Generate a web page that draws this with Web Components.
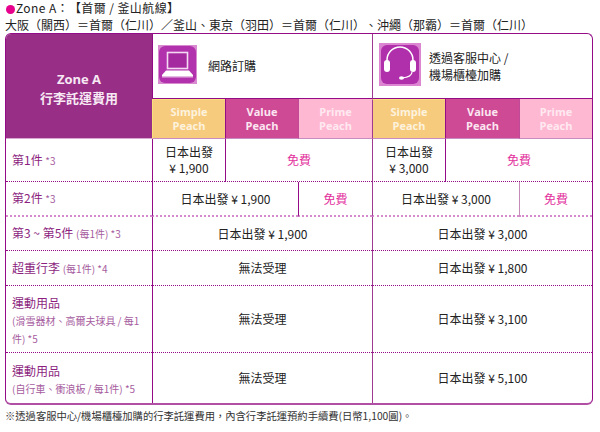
<!DOCTYPE html>
<html lang="zh-Hant">
<head>
<meta charset="utf-8">
<title>Zone A</title>
<style>
    html, body { margin: 0; background: #fff; }
    body { font-family: "Noto Sans CJK TC", sans-serif; }
</style>
</head>
<body>
<zone-page>
    <zone-title slot="top" route="Zone A：【首爾 / 釜山航線】">大阪（關西）＝首爾（仁川）／釜山、東京（羽田）＝首爾（仁川）、沖繩（那霸）＝首爾（仁川）</zone-title>

    <fare-table>
        <corner-head>Zone A<br>行李託運費用</corner-head>
        <channel-head icon="laptop">網路訂購</channel-head>
        <channel-head icon="headset" class="second">透過客服中心 /<br>機場櫃檯加購</channel-head>

        <plan-head kind="simple" first>Simple<br>Peach</plan-head>
        <plan-head kind="value">Value<br>Peach</plan-head>
        <plan-head kind="prime">Prime<br>Peach</plan-head>
        <plan-head kind="simple" first split>Simple<br>Peach</plan-head>
        <plan-head kind="value">Value<br>Peach</plan-head>
        <plan-head kind="prime">Prime<br>Peach</plan-head>

        <row-label line="dark">第1件 <small>*3</small></row-label>
        <fare-cell line="dark" edge="strong">日本出發<br>¥ 1,900</fare-cell>
        <fare-cell line="dark" edge="strong" span="2" free>免費</fare-cell>
        <fare-cell line="dark" edge="mid">日本出發<br>¥ 3,000</fare-cell>
        <fare-cell line="dark" edge="strong" span="2" free>免費</fare-cell>

        <row-label line="pale">第2件 <small>*3</small></row-label>
        <fare-cell line="pale" edge="strong" span="2">日本出發 ¥ 1,900</fare-cell>
        <fare-cell line="pale" edge="strong" free>免費</fare-cell>
        <fare-cell line="pale" edge="mid" span="2">日本出發 ¥ 3,000</fare-cell>
        <fare-cell line="pale" edge="pale" free>免費</fare-cell>

        <row-label line="dark">第3 ~ 第5件 <small>(每1件) *3</small></row-label>
        <fare-cell line="dark" edge="strong" span="3">日本出發 ¥ 1,900</fare-cell>
        <fare-cell line="dark" edge="mid" span="3">日本出發 ¥ 3,000</fare-cell>

        <row-label line="dark">超重行李 <small>(每1件) *4</small></row-label>
        <fare-cell line="dark" edge="strong" span="3">無法受理</fare-cell>
        <fare-cell line="dark" edge="mid" span="3">日本出發 ¥ 1,800</fare-cell>

        <row-label line="dark" tall>運動用品<br><small>(滑雪器材、高爾夫球具 / 每1件) *5</small></row-label>
        <fare-cell line="dark" edge="strong" span="3">無法受理</fare-cell>
        <fare-cell line="dark" edge="mid" span="3">日本出發 ¥ 3,100</fare-cell>

        <row-label tall>運動用品<br><small>(自行車、衝浪板 / 每1件) *5</small></row-label>
        <fare-cell edge="strong" span="3">無法受理</fare-cell>
        <fare-cell edge="mid" span="3">日本出發 ¥ 5,100</fare-cell>
    </fare-table>

    <fare-note>※透過客服中心/機場櫃檯加購的行李託運費用，內含行李託運預約手續費(日幣1,100圓)。</fare-note>
</zone-page>

<script>
const CJK = '"Noto Sans CJK TC", sans-serif';

const ICONS = {
    laptop: `
        <svg width="39" height="39" viewBox="0 0 39 39">
            <rect width="39" height="39" fill="#d98bd0"/>
            <rect x="1" y="1" width="37" height="37" rx="6" fill="#b232ae"/>
            <rect x="9.500" y="7.500" width="20" height="16" fill="#a52a9f" stroke="#f3d9f1" stroke-width="1.600"/>
            <path d="M8 25.500h23l4 4.500v1H4v-1z" fill="#fff"/>
            <path d="M4 31h31v1.500H4z" fill="#e5b9e2"/>
        </svg>`,
    headset: `
        <svg width="42" height="43" viewBox="0 0 42 43">
            <rect width="42" height="43" fill="#dc86d2"/>
            <rect x="2" y="2" width="38" height="39" rx="6" fill="#b02fab"/>
            <path d="M8 20v-3a13 13 0 0 1 26 0v3" fill="none" stroke="#fff" stroke-width="1.500"/>
            <rect x="5" y="17" width="6" height="12" rx="3" fill="#fff"/>
            <rect x="31" y="17" width="6" height="12" rx="3" fill="#fff"/>
            <path d="M33 29c0 4-5 5.500-10 6" fill="none" stroke="#fff" stroke-width="1.200"/>
            <ellipse cx="22.500" cy="35" rx="2.500" ry="1.700" fill="#fff"/>
        </svg>`
};

class ZonePage extends HTMLElement {
    constructor() {
        super();
        this.attachShadow({ mode: "open" });
        this.shadowRoot.innerHTML = `
            <style>
                :host {
                    display: flex;
                    flex-direction: column;
                    width: 600px;
                    height: 432px;
                    box-sizing: border-box;
                    padding: 0 7px 0 5px;
                    overflow: hidden;
                }
            </style>
            <slot name="top"></slot>
            <slot></slot>
        `;
    }
}

class ZoneTitle extends HTMLElement {
    constructor() {
        super();
        this.attachShadow({ mode: "open" });
        this.shadowRoot.innerHTML = `
            <style>
                :host {
                    display: block;
                    height: 33px;
                    color: #222;
                    font: 12px/16px ${CJK};
                    white-space: nowrap;
                    text-spacing-trim: space-all;
                }
                .route { height: 17px; line-height: 15px; letter-spacing: 0.400px; }
                .dot {
                    display: inline-block;
                    width: 9px;
                    height: 9px;
                    margin: 0 1px 0 1px;
                    border-radius: 50%;
                    background: #e6008c;
                    vertical-align: -0.5px;
                }
            </style>
            <div class="route"><span class="dot"></span><span class="name"></span></div>
            <div><slot></slot></div>
        `;
    }

    connectedCallback() {
        this.shadowRoot.querySelector(".name").textContent = this.getAttribute("route");
    }
}

class FareTable extends HTMLElement {
    constructor() {
        super();
        this.attachShadow({ mode: "open" });
        this.shadowRoot.innerHTML = `
            <style>
                :host {
                    display: grid;
                    box-sizing: border-box;
                    width: 588px;
                    grid-template-columns: 146px 73px 73px 74px 73px 74px 73px;
                    grid-template-rows: 65px 40px 43px 35px 34px 35px 67px 50px;
                    border: 1px solid #930b87;
                    border-bottom: 2px solid #b04fa4;
                    border-radius: 6px;
                    overflow: hidden;
                    background: #fff;
                }
            </style>
            <slot></slot>
        `;
    }
}

class CornerHead extends HTMLElement {
    constructor() {
        super();
        this.attachShadow({ mode: "open" });
        this.shadowRoot.innerHTML = `
            <style>
                :host {
                    display: flex;
                    grid-row: span 2;
                    align-items: center;
                    justify-content: center;
                    box-sizing: border-box;
                    padding-top: 6px;
                    background: #992e87;
                    border-bottom: 1px solid #d9a8d2;
                    color: #f6e9f3;
                    font: bold 13px/19px "Open Sans", ${CJK};
                    text-align: center;
                }
            </style>
            <div><slot></slot></div>
        `;
    }
}

class ChannelHead extends HTMLElement {
    constructor() {
        super();
        this.attachShadow({ mode: "open" });
        const type = this.getAttribute("icon");
        const second = type === "headset";
        this.shadowRoot.innerHTML = `
            <style>
                :host {
                    display: flex;
                    grid-column: span 3;
                    align-items: center;
                    box-sizing: border-box;
                    padding: ${second ? "0 0 4px 6px" : "0 0 4px 5px"};
                    gap: ${second ? "8px" : "11px"};
                    border-left: 1px solid ${second ? "#a03a90" : "#930b87"};
                    border-bottom: 1px solid #930b87;
                    color: #222;
                    font: 12px/17px ${CJK};
                }
                svg { display: block; flex: none; }
                .text { padding-top: ${second ? "4px" : "3px"}; }
            </style>
            ${ICONS[type]}
            <div class="text"><slot></slot></div>
        `;
    }
}

class PlanHead extends HTMLElement {
    constructor() {
        super();
        this.attachShadow({ mode: "open" });
        this.shadowRoot.innerHTML = `
            <style>
                :host {
                    display: flex;
                    align-items: center;
                    justify-content: center;
                    box-sizing: border-box;
                    border-bottom: 1px solid #c98cc0;
                    font: bold 11px/14px "Open Sans", sans-serif;
                    text-align: center;
                    color: #fff;
                }
                :host([kind="simple"]) { background: #f7cb7e; color: #fdf2dd; border-top: 1px solid #f9e07a; border-left: 1px solid #f9e07a; }
                :host([kind="value"]) { background: #cf4a94; color: #fbe6f1; border-left: 1px solid #930b87; }
                :host([kind="prime"]) { background: #ffb8d2; color: #ffe9f1; border-left: 1px solid #c04a98; }
                :host([split]) { border-left: 1px solid #a03a90; }
            </style>
            <div><slot></slot></div>
        `;
    }
}

class RowLabel extends HTMLElement {
    constructor() {
        super();
        this.attachShadow({ mode: "open" });
        this.shadowRoot.innerHTML = `
            <style>
                :host {
                    display: flex;
                    align-items: center;
                    box-sizing: border-box;
                    padding: 0 4px 1px 6px;
                    color: #8c1f80;
                    font: 12px/17px ${CJK};
                }
                :host([line="dark"]) { border-bottom: 1px dotted #930b87; }
                :host([line="pale"]) { border-bottom: 2px dotted #d58bcb; }
                :host([tall]) { padding: 2px 4px 0 6px; }
                ::slotted(small) { font-size: 10px; line-height: 16px; color: #a65c9e; }
            </style>
            <div><slot></slot></div>
        `;
    }
}

class FareCell extends HTMLElement {
    constructor() {
        super();
        this.attachShadow({ mode: "open" });
        this.shadowRoot.innerHTML = `
            <style>
                :host {
                    display: flex;
                    align-items: center;
                    justify-content: center;
                    box-sizing: border-box;
                    color: #222;
                    font: 12px/16px ${CJK};
                    text-align: center;
                }
                :host([span="2"]) { grid-column: span 2; }
                :host([span="3"]) { grid-column: span 3; }
                :host([free]) { color: #e3309c; }
                :host([line="dark"]) { border-bottom: 1px dotted #930b87; }
                :host([line="pale"]) { border-bottom: 2px dotted #d58bcb; }
                :host([edge="strong"]) { border-left: 1px solid #930b87; }
                :host([edge="mid"]) { border-left: 1px solid #a03a90; }
                :host([edge="pale"]) { border-left: 1px solid #c58ab8; }
            </style>
            <div><slot></slot></div>
        `;
    }
}

class FareNote extends HTMLElement {
    constructor() {
        super();
        this.attachShadow({ mode: "open" });
        this.shadowRoot.innerHTML = `
            <style>
                :host {
                    display: block;
                    margin-top: 3px;
                    color: #333;
                    font: 10.300px/16px ${CJK};
                    white-space: nowrap;
                }
            </style>
            <slot></slot>
        `;
    }
}

customElements.define("zone-page", ZonePage);
customElements.define("zone-title", ZoneTitle);
customElements.define("fare-table", FareTable);
customElements.define("corner-head", CornerHead);
customElements.define("channel-head", ChannelHead);
customElements.define("plan-head", PlanHead);
customElements.define("row-label", RowLabel);
customElements.define("fare-cell", FareCell);
customElements.define("fare-note", FareNote);
</script>
</body>
</html>
